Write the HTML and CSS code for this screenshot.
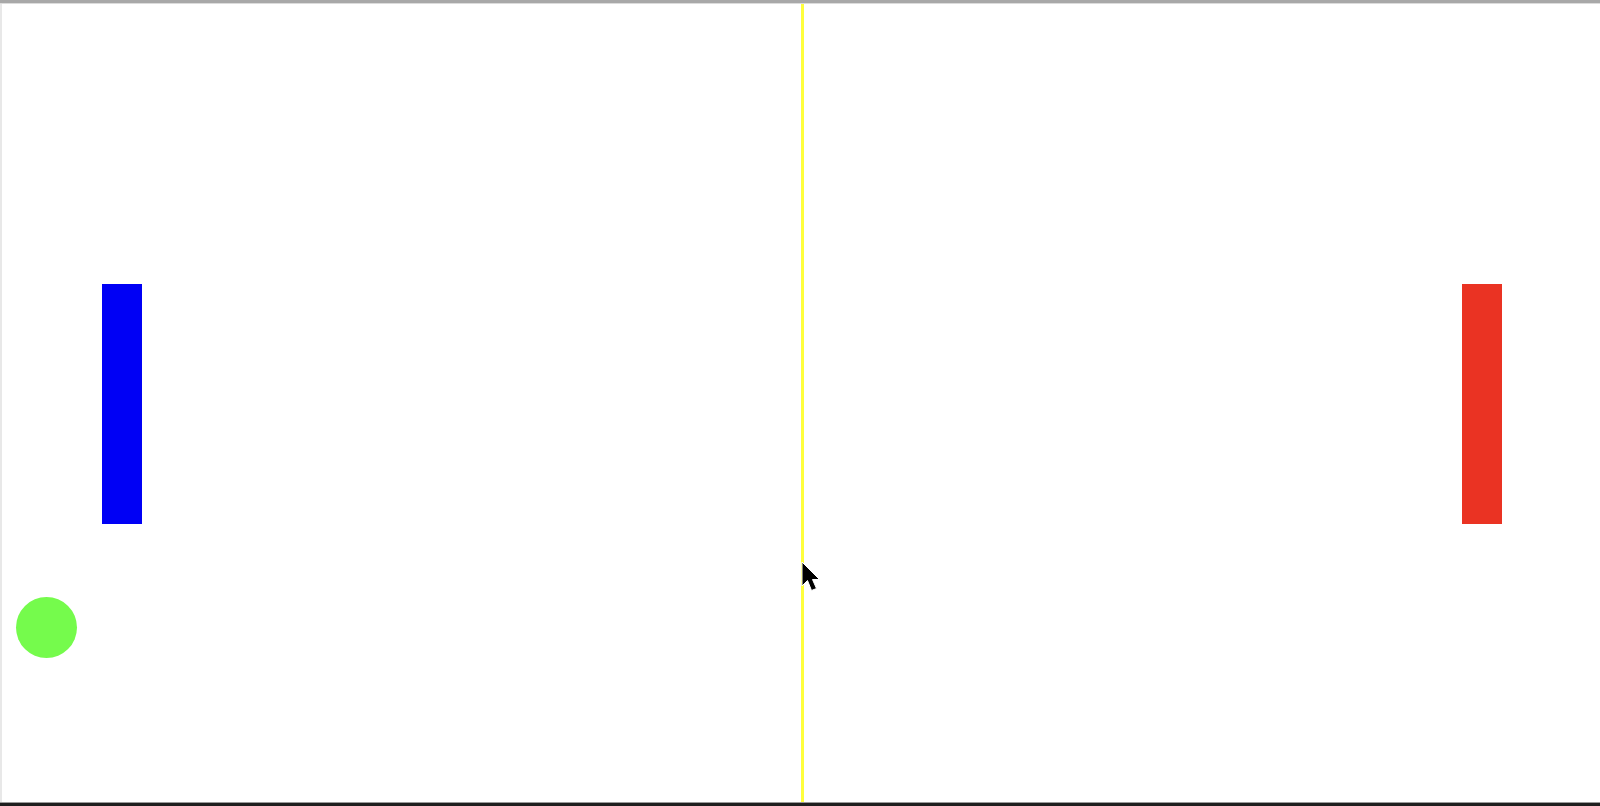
FILE: index.html
```html
<!DOCTYPE html>
<html>
<head>
<meta charset="utf-8">
<link rel="stylesheet" href="styles.css">
</head>
<body>
<div class="window">
  <div class="topbar"></div>
  <div class="main">
    <div class="leftedge"></div>
    <div class="canvas">
      <div class="midline"></div>
      <div class="paddle paddle-left"></div>
      <div class="paddle paddle-right"></div>
      <div class="ball"></div>
      <svg class="cursor" width="20" height="32" viewBox="0 0 20 32">
        <path d="M1 1 L1 25 L6.5 19.5 L10.5 29.5 L15.5 27.5 L11.5 18.5 L18.5 18.5 Z" fill="#000" stroke="#fff" stroke-width="1"/>
      </svg>
    </div>
  </div>
  <div class="bottombar"></div>
</div>
</body>
</html>
```
FILE: styles.css
```css
html, body {
  margin: 0;
  padding: 0;
  background: #ffffff;
  overflow: hidden;
}
.window {
  width: 1600px;
  height: 806px;
  display: flex;
  flex-direction: column;
}
.topbar {
  height: 3px;
  background: #a8a8a8;
  border-bottom: 1px solid #dcdcdc;
}
.main {
  flex: 1;
  display: flex;
}
.leftedge {
  width: 2px;
  background: #e8e8e8;
}
.canvas {
  flex: 1;
  position: relative;
  background: #ffffff;
}
.midline {
  position: absolute;
  left: 799px;
  top: 0;
  bottom: 0;
  width: 3px;
  background: #ffff3c;
}
.paddle {
  position: absolute;
  top: 280px;
  width: 40px;
  height: 240px;
}
.paddle-left {
  left: 100px;
  background: #0000f5;
}
.paddle-right {
  left: 1460px;
  background: #ea3323;
}
.ball {
  position: absolute;
  left: 14px;
  top: 593px;
  width: 61px;
  height: 61px;
  border-radius: 50%;
  background: #75fb4c;
}
.cursor {
  position: absolute;
  left: 799px;
  top: 557px;
}
.bottombar {
  height: 3px;
  background: #1e1e1e;
  border-top: 1px solid #9a9a9a;
}
```
